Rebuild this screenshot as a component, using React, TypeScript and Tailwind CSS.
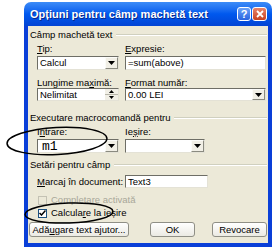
import React from 'react';

const font = { fontFamily: '"Liberation Sans", Arial, sans-serif' };

function Arrow() {
    return (
        <div className="w-[13px] h-full flex items-center justify-center bg-[#f1efe6] border border-t-[#fbfbf8] border-l-[#fbfbf8] border-b-[#8a8a80] border-r-[#8a8a80]">
            <svg width="7" height="4" viewBox="0 0 7 4"><path d="M0 0h7L3.5 4z" fill="#000" /></svg>
        </div>
    );
}

function Field({ w, h = 14, children, arrow = false, spin = false, mono = false }: { w: number; h?: number; children?: React.ReactNode; arrow?: boolean; spin?: boolean; mono?: boolean }) {
    return (
        <div
            className="flex bg-white border border-t-[#6e6e66] border-l-[#6e6e66] border-b-[#e4e2d6] border-r-[#e4e2d6]"
            style={{ width: w, height: h }}
        >
            <div className={mono ? 'flex-1 flex items-center pl-[4px] text-[13px] leading-none' : 'flex-1 flex items-center pl-[2px] text-[9.5px] leading-none'}
                style={mono ? { fontFamily: '"Liberation Mono", "Courier New", monospace' } : undefined}>
                {children}
            </div>
            {arrow && <Arrow />}
            {spin && (
                <div className="w-[13px] h-full flex flex-col">
                    <div className="flex-1 flex items-center justify-center bg-[#f1efe6] border-b border-[#b8b6aa]">
                        <svg width="5" height="3" viewBox="0 0 5 3"><path d="M0 3h5L2.5 0z" fill="#000" /></svg>
                    </div>
                    <div className="flex-1 flex items-center justify-center bg-[#f1efe6]">
                        <svg width="5" height="3" viewBox="0 0 5 3"><path d="M0 0h5L2.5 3z" fill="#000" /></svg>
                    </div>
                </div>
            )}
        </div>
    );
}

function Group({ label }: { label: string }) {
    return (
        <div className="h-[12px] flex items-center pl-[2px] pr-[1px] gap-[4px]">
            <span className="text-[9.5px] leading-none whitespace-nowrap">{label}</span>
            <div className="flex-1 h-[2px] border-t border-[#d0d0bf] border-b border-b-white" />
        </div>
    );
}

function Btn({ w, children }: { w: number; children: React.ReactNode }) {
    return (
        <div
            className="h-[15px] flex items-center justify-center rounded-[3px] border border-[#8f8f86] bg-gradient-to-b from-white to-[#ebeae3] text-[9.5px] leading-none whitespace-nowrap"
            style={{ width: w }}
        >
            {children}
        </div>
    );
}

export default function App() {
    return (
        <div className="relative w-[279px] h-[252px] bg-white overflow-hidden text-black" style={font}>
            <div className="ml-[24px] mt-[2px] w-[248px] flex flex-col">
                {/* title bar */}
                <div className="h-[24px] rounded-t-[7px] bg-gradient-to-b from-[#3d8cf7] via-[#0058ee] to-[#0344d4] flex items-center pl-[6px] pr-[5px]">
                    <span className="flex-1 text-white font-bold text-[11px] whitespace-nowrap" style={{ textShadow: '1px 1px 0 #0a2a8a' }}>
                        Opțiuni pentru câmp machetă text
                    </span>
                    <div className="w-[14px] h-[14px] rounded-[3px] border border-white bg-gradient-to-b from-[#6aa2f8] to-[#2a63e0] flex items-center justify-center text-white font-bold text-[11px] leading-none">?</div>
                    <div className="ml-[1px] w-[15px] h-[14px] rounded-[3px] border border-white bg-gradient-to-b from-[#e8836a] to-[#c8401e] flex items-center justify-center">
                        <svg width="8" height="8" viewBox="0 0 8 8"><path d="M1 1l6 6M7 1l-6 6" stroke="#fff" strokeWidth="1.8" /></svg>
                    </div>
                </div>
                {/* body */}
                <div className="bg-[#ece9d8] border-l-[4px] border-r-[4px] border-b-[4px] border-[#0a3fd8] pt-[3px] pb-[6px] flex flex-col">
                    <Group label="Câmp machetă text" />
                    <div className="pl-[9px] pr-[1px] flex gap-[6px] text-[9.5px] leading-none">
                        <div className="w-[82px] flex flex-col">
                            <div className="h-[10px] mt-[3px] flex items-center"><span><u>T</u>ip:</span></div>
                            <div className="mt-[2px]"><Field w={82} arrow>Calcul</Field></div>
                            <div className="h-[10px] mt-[8px] flex items-center"><span>Lungime ma<u>x</u>imă:</span></div>
                            <Field w={82} h={13} spin>Nelimitat</Field>
                        </div>
                        <div className="w-[141px] flex flex-col">
                            <div className="h-[10px] mt-[3px] flex items-center"><span><u>E</u>xpresie:</span></div>
                            <div className="mt-[2px]"><Field w={141}>=sum(above)</Field></div>
                            <div className="h-[10px] mt-[8px] flex items-center"><span><u>F</u>ormat număr:</span></div>
                            <Field w={141} h={13} arrow>0.00 LEI</Field>
                        </div>
                    </div>
                    <div className="mt-[11px]"><Group label="Executare macrocomandă pentru" /></div>
                    <div className="pl-[9px] flex gap-[6px] text-[9.5px] leading-none">
                        <div className="w-[82px] flex flex-col">
                            <div className="h-[10px] mt-[3px] flex items-center"><span>I<u>n</u>trare:</span></div>
                            <div className="mt-[2px]"><Field w={82} arrow mono>m1</Field></div>
                        </div>
                        <div className="w-[80px] flex flex-col">
                            <div className="h-[10px] mt-[3px] flex items-center"><span>Ie<u>ș</u>ire:</span></div>
                            <div className="mt-[2px]"><Field w={80} arrow /></div>
                        </div>
                    </div>
                    <div className="mt-[6px]"><Group label="Setări pentru câmp" /></div>
                    <div className="pl-[9px] mt-[4px] flex items-center text-[9.5px] leading-none">
                        <span className="w-[88px] shrink-0 whitespace-nowrap"><u>M</u>arcaj în document:</span>
                        <Field w={83} h={13}>Text3</Field>
                    </div>
                    <div className="pl-[10px] mt-[6px] h-[12px] flex items-center gap-[4px] text-[9.5px] leading-none text-[#a8a798]">
                        <div className="w-[9px] h-[9px] border border-[#c4c2b4] bg-[#ece9d8]" />
                        <span>Completare activată</span>
                    </div>
                    <div className="pl-[10px] mt-[1px] h-[12px] flex items-center gap-[4px] text-[9.5px] leading-none">
                        <div className="w-[9px] h-[9px] border border-[#1c5180] bg-white flex items-center justify-center">
                            <svg width="7" height="6" viewBox="0 0 7 6"><path d="M0.5 3l2 2 4-4.5" stroke="#000" strokeWidth="1.5" fill="none" /></svg>
                        </div>
                        <span>Calcula<u>r</u>e la ieșire</span>
                    </div>
                    <div className="pl-[1px] mt-[3px] flex items-center">
                        <Btn w={100}>Adă<u>u</u>gare text ajutor...</Btn>
                        <div className="ml-[21px]"><Btn w={45}>OK</Btn></div>
                        <div className="ml-[17px]"><Btn w={55}>Revocare</Btn></div>
                    </div>
                </div>
            </div>
            {/* hand-drawn annotation ellipses */}
            <svg className="absolute inset-0 pointer-events-none" width="279" height="252" viewBox="0 0 279 252">
                <ellipse cx="57" cy="141" rx="50" ry="13.5" transform="rotate(-3 57 141)" fill="none" stroke="#000" strokeWidth="1.5" />
                <ellipse cx="69" cy="213" rx="44" ry="10" transform="rotate(-2 69 213)" fill="none" stroke="#000" strokeWidth="1.5" />
            </svg>
        </div>
    );
}
